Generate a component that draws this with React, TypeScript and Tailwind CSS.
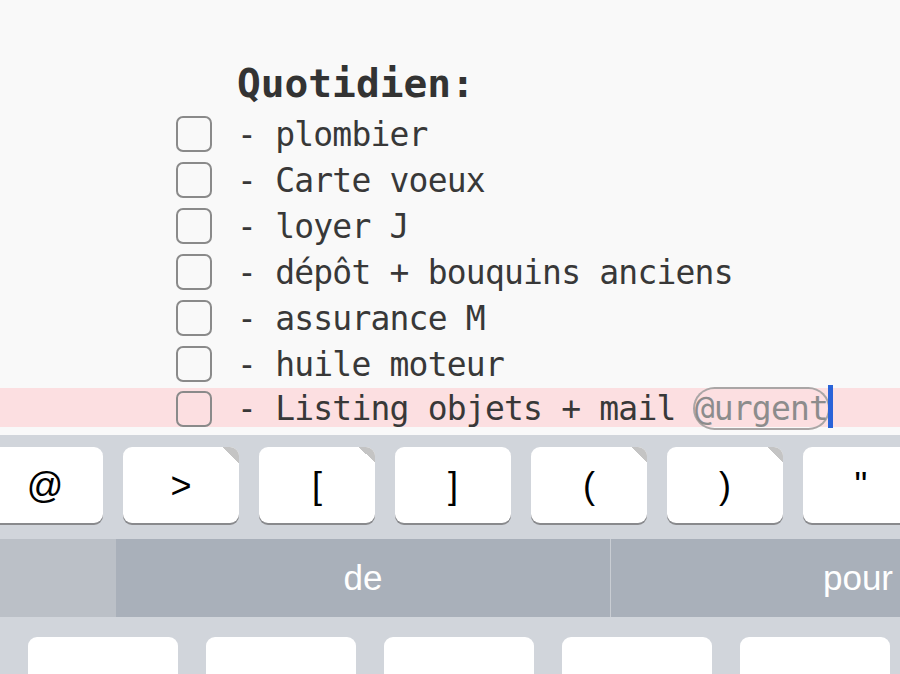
import React from "react";

const mono = { fontFamily: '"DejaVu Sans Mono", "Liberation Mono", monospace' };
const sans = { fontFamily: '"Liberation Sans", Arial, sans-serif' };

const items = [
  "- plombier",
  "- Carte voeux",
  "- loyer J",
  "- dépôt + bouquins anciens",
  "- assurance M",
  "- huile moteur",
];

function Box() {
  return <div className="w-[36px] h-[36px] shrink-0 rounded-[7px] border-2 border-[#8a8a8a]" />;
}

const keys: { label: string; corner: boolean }[] = [
  { label: "@", corner: false },
  { label: ">", corner: true },
  { label: "[", corner: true },
  { label: "]", corner: false },
  { label: "(", corner: true },
  { label: ")", corner: true },
  { label: '"', corner: false },
];

export default function App() {
  return (
    <div className="w-[900px] h-[674px] overflow-hidden bg-[#f9f9f9] flex flex-col">
      <div className="pb-[2px]" style={mono}>
        <div className="pl-[237px] pt-[60px] mb-[5px] text-[39.5px] leading-[46px] font-bold text-[#333333]">
          Quotidien:
        </div>
        {items.map((t) => (
          <div key={t} className="h-[46px] pl-[176px] flex items-center">
            <Box />
            <span className="ml-[25px] text-[33px] tracking-[-0.8px] leading-[46px] text-[#383838] whitespace-pre translate-y-[1px]">
              {t}
            </span>
          </div>
        ))}
        <div className="h-[46px] pl-[176px] flex items-center bg-[linear-gradient(to_bottom,transparent_1px,#fcdfe1_1px,#fcdfe1_40px,transparent_40px)]">
          <div className="-translate-y-[1px]">
            <Box />
          </div>
          <span className="ml-[25px] text-[33px] tracking-[-0.8px] leading-[46px] text-[#383838] whitespace-pre -translate-y-[1px]">
            {"- Listing objets + mail "}
            <span className="rounded-[20px] ring-2 ring-[#aaa6a6] text-[#8c8c8c]">@urgent</span>
          </span>
          <span className="inline-block w-[5px] h-[43px] bg-[#2a63d8] -translate-y-[4px]" />
        </div>
      </div>
      <div className="flex-1 bg-[#d1d5db] pt-[12px] overflow-hidden" style={sans}>
        <div className="flex gap-[20px] ml-[-13px]">
          {keys.map((k) => (
            <div
              key={k.label}
              className="relative w-[116px] h-[76px] shrink-0 rounded-[9px] bg-white shadow-[0_2px_0_#898a8d] flex items-center justify-center text-[36px] text-black"
            >
              {k.corner && (
                <div className="absolute top-0 right-0 w-[16px] h-[16px] rounded-tr-[9px] bg-[linear-gradient(to_bottom_left,#c4c4c4_50%,transparent_50%)]" />
              )}
              <span className="translate-y-[1px]">{k.label}</span>
            </div>
          ))}
        </div>
        <div className="mt-[16px] h-[78px] flex">
          <div className="w-[116px] shrink-0 bg-[#bbc0c7]" />
          <div className="w-[494px] shrink-0 bg-[#a9b0ba] flex items-center justify-center text-white text-[35px]">
            de
          </div>
          <div className="w-[1px] shrink-0 bg-[#c9cdd3]" />
          <div className="w-[494px] shrink-0 bg-[#a9b0ba] flex items-center justify-center text-white text-[35px]">
            pour
          </div>
        </div>
        <div className="mt-[20px] flex gap-[28px] pl-[28px]">
          {[0, 1, 2, 3, 4].map((i) => (
            <div key={i} className="w-[150px] h-[60px] shrink-0 rounded-[9px] bg-white" />
          ))}
        </div>
      </div>
    </div>
  );
}
